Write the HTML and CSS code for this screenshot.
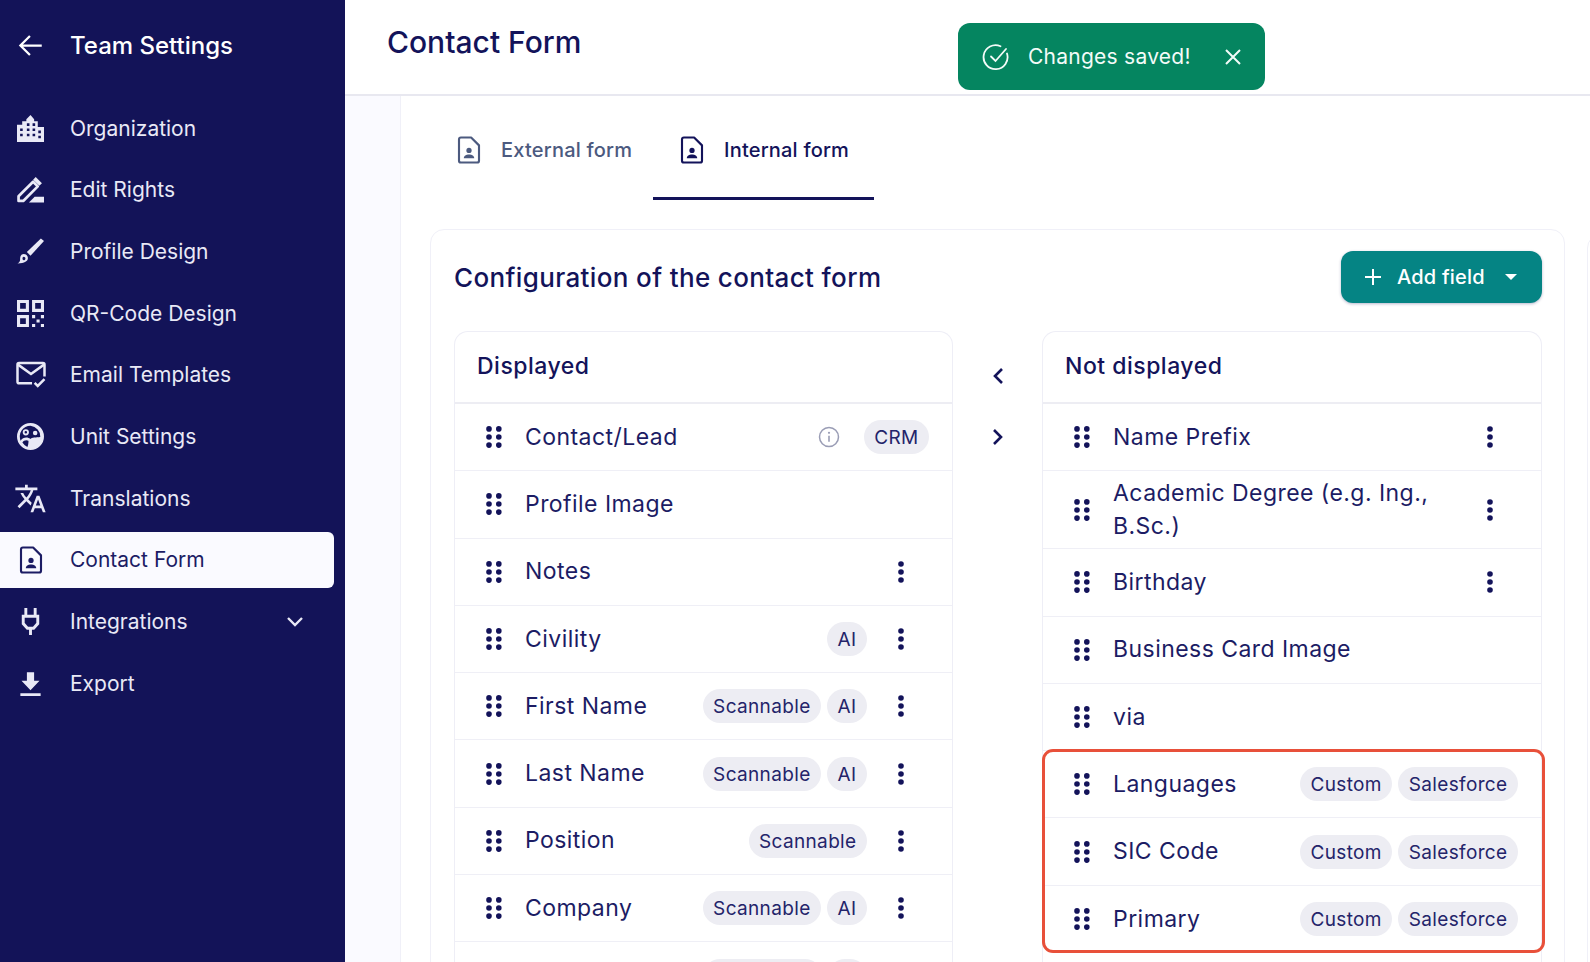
FILE: index.html
```html
<!DOCTYPE html>
<html lang="en">
<head>
    <meta charset="UTF-8">
    <title>Contact Form</title>
    <link rel="stylesheet" href="styles.css">
</head>
<body>
<svg class="sprite" width="0" height="0">
    <symbol id="i-form" viewBox="0 0 24 24">
        <path d="M5.500 2h8.200L20 8.300V20.500a1.500 1.500 0 0 1-1.500 1.500h-13A1.500 1.500 0 0 1 4 20.500v-17A1.500 1.500 0 0 1 5.500 2z" fill="none" stroke="currentColor" stroke-width="1.700" stroke-linejoin="round"/>
        <circle cx="12" cy="12.300" r="2.100" fill="currentColor"/>
        <path d="M7.800 18.600c0-2 1.900-3.100 4.200-3.100s4.200 1.100 4.200 3.100z" fill="currentColor"/>
    </symbol>
    <symbol id="i-drag" viewBox="0 0 16 22">
        <circle cx="3" cy="2.900" r="2.800"/><circle cx="12.800" cy="2.900" r="2.800"/>
        <circle cx="3" cy="11" r="2.800"/><circle cx="12.800" cy="11" r="2.800"/>
        <circle cx="3" cy="19.100" r="2.800"/><circle cx="12.800" cy="19.100" r="2.800"/>
    </symbol>
    <symbol id="i-more" viewBox="0 0 6 22">
        <circle cx="3" cy="3" r="2.800"/><circle cx="3" cy="11" r="2.800"/><circle cx="3" cy="19" r="2.800"/>
    </symbol>
</svg>

<div class="app">
    <aside class="sidebar">
        <header class="side-head">
            <svg class="side-icon" viewBox="0 0 24 24"><path d="M22 12H3.500M11.500 3.500 3 12l8.500 8.500" fill="none" stroke="currentColor" stroke-width="2"/></svg>
            <span>Team Settings</span>
        </header>
        <ul class="side-list">
            <li class="side-item">
                <svg class="side-icon" viewBox="0 0 26 26"><path fill-rule="evenodd" fill="currentColor" d="M0 26V9.500h5V6h4V4L13 0l3.500 4v2h3.500v5.500h6V26zM3 13v2.500h2.500V13zm0 5v2.500h2.500V18zm6.500-5v2.500H12V13zm0 5v2.500H12V18zm0-10v2.500H12V8zm5.500 5v2.500h2.500V13zm0 5v2.500h2.500V18zm0-10v2.500h2.500V8zm5.500 7v2.500H23V15zm0 5v2.500H23V20z"/></svg>
                <span>Organization</span>
            </li>
            <li class="side-item">
                <svg class="side-icon" viewBox="0 0 26 26"><path d="M1.500 24v-4.500L15.500 5.500l4.500 4.500L6 24z" fill="none" stroke="currentColor" stroke-width="2.600" stroke-linejoin="round"/><path d="m18 1 6 6-2.500 2.500-6-6z" fill="currentColor"/><path d="m11.500 25.500 5.500-5.500h9v5.500z" fill="currentColor"/></svg>
                <span>Edit Rights</span>
            </li>
            <li class="side-item">
                <svg class="side-icon" viewBox="0 0 26 26"><path d="M26 3 13 17l-3.500-3.500L23 .5z" fill="currentColor"/><path d="M6.500 15.500c2.500 0 4 1.700 4 3.800 0 3-3 5.200-10 5.200 1.800-1 2.500-2.200 2.500-3.900 0-2.800 1-5.100 3.500-5.100zm0 2.600c-.9 0-1.200.9-1.200 2 0 .8.500 1.300 1.200 1.300.9 0 1.600-.7 1.600-1.700 0-.9-.7-1.600-1.600-1.600z" fill="currentColor" fill-rule="evenodd"/></svg>
                <span>Profile Design</span>
            </li>
            <li class="side-item">
                <svg class="side-icon" viewBox="0 0 26 26"><path fill-rule="evenodd" fill="currentColor" d="M0 0h11.500v11.500H0zm3 3v5.500h5.500V3zM14.500 0H26v11.500H14.500zM17.500 3v5.500H23V3zM0 14.500h11.500V26H0zM3 17.500V23h5.500v-5.500z"/><path fill="currentColor" d="M14.500 14.500h3v3h-3zm8.500 0h3v3h-3zm-4.200 4.200h3v3h-3zm-4.300 4.300h3v3h-3zm8.500 0h3v3h-3z"/></svg>
                <span>QR-Code Design</span>
            </li>
            <li class="side-item">
                <svg class="side-icon side-icon-mail" viewBox="0 0 28 26"><path d="M15 21.500H2.500A1.500 1.500 0 0 1 1 20V3.500A1.500 1.500 0 0 1 2.500 2h23A1.500 1.500 0 0 1 27 3.500V15" fill="none" stroke="currentColor" stroke-width="2.400"/><path d="m1.500 3.500 12.500 9 12.500-9" fill="none" stroke="currentColor" stroke-width="2.400"/><path d="m17.500 21 3 3 6.500-6.500" fill="none" stroke="currentColor" stroke-width="2.400"/></svg>
                <span>Email Templates</span>
            </li>
            <li class="side-item">
                <svg class="side-icon" viewBox="0 0 26 26"><path fill-rule="evenodd" fill="currentColor" d="M13 0a13 13 0 1 1 0 26 13 13 0 0 1 0-26zm0 2.600A10.400 10.400 0 0 0 3.500 17c1.200-2 3.300-3 5.500-3 1.500 0 2.800.500 3.800 1.400 1.500-1.800 5.500-1.200 9.600-1.900A10.400 10.400 0 0 0 13 2.600zM8.500 6a3 3 0 1 1 0 6 3 3 0 0 1 0-6zm0 1.800a1.200 1.200 0 1 0 0 2.400 1.200 1.200 0 0 0 0-2.400zM17.500 7.500a2.200 2.200 0 1 1 0 4.400 2.200 2.200 0 0 1 0-4.400zM9 16.500c-1.500 0-3 .8-3.800 2.300A10.400 10.400 0 0 0 10 23c.8-1.700 1.200-3.700 1-5.800-.5-.4-1.200-.7-2-.7z"/></svg>
                <span>Unit Settings</span>
            </li>
            <li class="side-item">
                <svg class="side-icon side-icon-xl" viewBox="0 0 24 24"><path fill="currentColor" d="M12.870 15.070l-2.540-2.510.03-.03c1.740-1.940 2.980-4.170 3.710-6.530H17V4h-7V2H8v2H1v1.990h11.170C11.500 7.920 10.440 9.750 9 11.350 8.070 10.320 7.300 9.190 6.690 8h-2c.73 1.630 1.730 3.170 2.980 4.560l-5.090 5.020L4 19l5-5 3.110 3.110.76-2.040zM18.500 10h-2L12 22h2l1.120-3h4.750L21 22h2l-4.500-12zm-2.620 7l1.620-4.330L19.120 17h-3.240z"/></svg>
                <span>Translations</span>
            </li>
            <li class="side-item active">
                <svg class="side-icon side-icon-lg"><use href="#i-form"/></svg>
                <span>Contact Form</span>
            </li>
            <li class="side-item">
                <svg class="side-icon" viewBox="0 0 26 26"><path d="M8.500 0v7M17.500 0v7M6 8h14v7l-4 4.500h-6L6 15zM13 19.500V26" fill="none" stroke="currentColor" stroke-width="2.800"/></svg>
                <span>Integrations</span>
                <svg class="side-caret" viewBox="0 0 18 12"><path d="m2 2 7 7 7-7" fill="none" stroke="currentColor" stroke-width="2.400"/></svg>
            </li>
            <li class="side-item">
                <svg class="side-icon" viewBox="0 0 24 24"><path fill="currentColor" d="M3 23h18v-2.400H3zM20 9.500h-4.800V2H8.800v7.500H4l8 8.500z"/></svg>
                <span>Export</span>
            </li>
        </ul>
    </aside>

    <main class="main">
        <header class="top-bar">
            <h1>Contact Form</h1>
            <div class="toast">
                <svg class="toast-check" viewBox="0 0 28 28"><path d="M25 10.500A12 12 0 1 1 18.500 3.200" fill="none" stroke="currentColor" stroke-width="1.800" stroke-linecap="round"/><path d="m9 13.500 4.500 4.500L24 6" fill="none" stroke="currentColor" stroke-width="1.800" stroke-linecap="round"/></svg>
                <span>Changes saved!</span>
                <svg class="toast-close" viewBox="0 0 18 18"><path d="m2 2 14 14M16 2 2 16" fill="none" stroke="currentColor" stroke-width="2"/></svg>
            </div>
        </header>

        <div class="content">
            <div class="strip"></div>
            <section class="page">
                <ul class="tabs">
                    <li class="tab">
                        <svg class="tab-icon"><use href="#i-form"/></svg>
                        <span>External form</span>
                    </li>
                    <li class="tab selected">
                        <svg class="tab-icon"><use href="#i-form"/></svg>
                        <span>Internal form</span>
                    </li>
                </ul>

                <div class="cards">
                    <div class="card">
                        <div class="card-head">
                            <h2>Configuration of the contact form</h2>
                            <button class="add-btn">
                                <svg class="add-plus" viewBox="0 0 18 18"><path d="M9 1v16M1 9h16" fill="none" stroke="currentColor" stroke-width="2"/></svg>
                                <span>Add field</span>
                                <i class="add-caret"></i>
                            </button>
                        </div>

                        <div class="columns">
                            <div class="panel panel-left">
                                <h3 class="panel-title">Displayed</h3>
                                <div class="row">
                                    <svg class="drag"><use href="#i-drag"/></svg>
                                    <span class="name">Contact/Lead</span>
                                    <svg class="info" viewBox="0 0 22 22"><circle cx="11" cy="11" r="9.500" fill="none" stroke="currentColor" stroke-width="1.500"/><path d="M11 9.800v6" stroke="currentColor" stroke-width="1.600"/><circle cx="11" cy="6.800" r="1.100" fill="currentColor"/></svg>
                                    <span class="tag">CRM</span>
                                </div>
                                <div class="row">
                                    <svg class="drag"><use href="#i-drag"/></svg>
                                    <span class="name">Profile Image</span>
                                </div>
                                <div class="row">
                                    <svg class="drag"><use href="#i-drag"/></svg>
                                    <span class="name">Notes</span>
                                    <svg class="more"><use href="#i-more"/></svg>
                                </div>
                                <div class="row">
                                    <svg class="drag"><use href="#i-drag"/></svg>
                                    <span class="name">Civility</span>
                                    <span class="tag">AI</span>
                                    <svg class="more"><use href="#i-more"/></svg>
                                </div>
                                <div class="row">
                                    <svg class="drag"><use href="#i-drag"/></svg>
                                    <span class="name">First Name</span>
                                    <span class="tag">Scannable</span>
                                    <span class="tag">AI</span>
                                    <svg class="more"><use href="#i-more"/></svg>
                                </div>
                                <div class="row">
                                    <svg class="drag"><use href="#i-drag"/></svg>
                                    <span class="name">Last Name</span>
                                    <span class="tag">Scannable</span>
                                    <span class="tag">AI</span>
                                    <svg class="more"><use href="#i-more"/></svg>
                                </div>
                                <div class="row">
                                    <svg class="drag"><use href="#i-drag"/></svg>
                                    <span class="name">Position</span>
                                    <span class="tag">Scannable</span>
                                    <svg class="more"><use href="#i-more"/></svg>
                                </div>
                                <div class="row">
                                    <svg class="drag"><use href="#i-drag"/></svg>
                                    <span class="name">Company</span>
                                    <span class="tag">Scannable</span>
                                    <span class="tag">AI</span>
                                    <svg class="more"><use href="#i-more"/></svg>
                                </div>
                                <!-- only the top of the next row's pills is inside the window -->
                                <div class="row">
                                    <svg class="drag"><use href="#i-drag"/></svg>
                                    <span class="name"></span>
                                    <span class="tag tag-wide"></span>
                                    <span class="tag tag-small"></span>
                                    <svg class="more"><use href="#i-more"/></svg>
                                </div>
                            </div>

                            <div class="arrows">
                                <svg class="arrow" viewBox="0 0 12 18"><path d="M10 2 3 9l7 7" fill="none" stroke="currentColor" stroke-width="2.600"/></svg>
                                <svg class="arrow" viewBox="0 0 12 18"><path d="m2 2 7 7-7 7" fill="none" stroke="currentColor" stroke-width="2.600"/></svg>
                            </div>

                            <div class="panel panel-right">
                                <h3 class="panel-title">Not displayed</h3>
                                <div class="row">
                                    <svg class="drag"><use href="#i-drag"/></svg>
                                    <span class="name">Name Prefix</span>
                                    <svg class="more"><use href="#i-more"/></svg>
                                </div>
                                <div class="row">
                                    <svg class="drag"><use href="#i-drag"/></svg>
                                    <span class="name">Academic Degree (e.g. Ing.,<br>B.Sc.)</span>
                                    <svg class="more"><use href="#i-more"/></svg>
                                </div>
                                <div class="row">
                                    <svg class="drag"><use href="#i-drag"/></svg>
                                    <span class="name">Birthday</span>
                                    <svg class="more"><use href="#i-more"/></svg>
                                </div>
                                <div class="row">
                                    <svg class="drag"><use href="#i-drag"/></svg>
                                    <span class="name">Business Card Image</span>
                                </div>
                                <div class="row">
                                    <svg class="drag"><use href="#i-drag"/></svg>
                                    <span class="name">via</span>
                                </div>
                                <div class="highlight">
                                    <div class="row">
                                        <svg class="drag"><use href="#i-drag"/></svg>
                                        <span class="name">Languages</span>
                                        <span class="tag">Custom</span>
                                        <span class="tag">Salesforce</span>
                                    </div>
                                    <div class="row">
                                        <svg class="drag"><use href="#i-drag"/></svg>
                                        <span class="name">SIC Code</span>
                                        <span class="tag">Custom</span>
                                        <span class="tag">Salesforce</span>
                                    </div>
                                    <div class="row">
                                        <svg class="drag"><use href="#i-drag"/></svg>
                                        <span class="name">Primary</span>
                                        <span class="tag">Custom</span>
                                        <span class="tag">Salesforce</span>
                                    </div>
                                </div>
                            </div>
                        </div>
                    </div>
                    <div class="card card-next"></div>
                </div>
            </section>
        </div>
    </main>
</div>
</body>
</html>
```

FILE: styles.css
```css
*{
    padding: 0;
    margin: 0;
    box-sizing: border-box;
}
html,body{
    height: 100%;
    overflow: hidden;
}
body{
    font-family: "Inter", "Open Sans", sans-serif;
    color: #13135a;
    background: #fff;
}
ul{
    list-style: none;
}
.sprite{
    position: absolute;
}
.app{
    display: flex;
    height: 962px;
}

/* sidebar */
.sidebar{
    width: 345px;
    flex: none;
    background: #131358;
    color: #e9e9f6;
}
.side-head{
    display: flex;
    align-items: center;
    height: 90px;
    padding-left: 17px;
    gap: 26px;
    color: #fff;
    font-size: 24px;
    font-weight: 500;
}
.side-icon{
    width: 27px;
    height: 27px;
    flex: none;
}
.side-icon-lg{
    width: 30px;
    height: 30px;
    margin: 0 -1.5px;
}
.side-icon-xl{
    width: 33px;
    height: 33px;
    margin: 0 -3px;
}
.side-icon-mail{
    width: 30px;
    margin: 0 -1.5px;
}
.side-list{
    display: flex;
    flex-direction: column;
    gap: 5.7px;
    padding-top: 10px;
}
.side-item{
    display: flex;
    align-items: center;
    gap: 26px;
    height: 56px;
    width: 334px;
    padding-left: 17px;
    font-size: 21px;
}
.side-item.active{
    background: #fafaff;
    color: #1c1c64;
    border-radius: 0 6px 6px 0;
}
.side-caret{
    width: 18px;
    height: 12px;
    margin-left: auto;
    margin-right: 30px;
}

/* top bar */
.main{
    flex: 1;
    min-width: 0;
    display: flex;
    flex-direction: column;
}
.top-bar{
    position: relative;
    height: 96px;
    flex: none;
    padding: 22px 0 0 42px;
    border-bottom: 2px solid #e8e8f0;
}
.top-bar h1{
    font-size: 30px;
    font-weight: 500;
    line-height: 40px;
}
.toast{
    position: absolute;
    left: 613px;
    top: 23px;
    width: 307px;
    height: 67px;
    display: flex;
    align-items: center;
    padding-left: 24px;
    background: #058560;
    color: #f3fbf8;
    border-radius: 12px;
    font-size: 21px;
    letter-spacing: .25px;
}
.toast-check{
    width: 28px;
    height: 28px;
    margin-right: 18px;
}
.toast-close{
    width: 18px;
    height: 18px;
    margin-left: auto;
    margin-right: 23px;
}

/* content */
.content{
    flex: 1;
    min-height: 0;
    display: flex;
}
.strip{
    width: 56px;
    flex: none;
    background: #fafaff;
    border-right: 1px solid #f0f0f8;
}
.page{
    flex: 1;
    min-width: 0;
    overflow: hidden;
}
.tabs{
    display: flex;
    height: 104px;
    padding-left: 29px;
}
.tab{
    display: flex;
    align-items: center;
    gap: 21px;
    width: 223px;
    height: 104px;
    padding: 7px 0 3px 28px;
    font-size: 20px;
    font-weight: 500;
    letter-spacing: .2px;
    color: #4c5a7f;
}
.tab.selected{
    width: 221px;
    color: #13135a;
    border-bottom: 3px solid #13135a;
    padding-bottom: 0;
}
.tab-icon{
    width: 30px;
    height: 30px;
    margin: 0 -4px;
    flex: none;
}
.cards{
    display: flex;
    gap: 22px;
    padding: 29px 0 0 29px;
}
.card{
    flex: none;
    width: 1135px;
    border: 1px solid #f0f0f8;
    border-radius: 14px;
    padding: 21px 22px 0 23px;
}
.card-next{
    margin-top: 5px;
    width: 100px;
}
.card-head{
    display: flex;
    align-items: center;
    justify-content: space-between;
    height: 52px;
    margin-bottom: 28px;
}
.card-head h2{
    font-size: 26px;
    font-weight: 500;
    letter-spacing: .36px;
}
.add-btn{
    display: flex;
    align-items: center;
    width: 201px;
    height: 52px;
    padding-left: 23px;
    border: none;
    border-radius: 12px;
    background: #058484;
    color: #fff;
    font: 500 20px "Inter", sans-serif;
    letter-spacing: .2px;
    box-shadow: 0 1px 3px rgba(19,19,90,.3);
}
.add-plus{
    width: 18px;
    height: 18px;
    margin-right: 15px;
}
.add-caret{
    border: 6px solid transparent;
    border-top-color: #fff;
    border-bottom: none;
    margin-left: auto;
    margin-right: 25px;
}

/* lists */
.columns{
    display: grid;
    grid-template-columns: 499px 89px 500px;
}
.panel{
    border: 1px solid #eeeef6;
    border-bottom: none;
    border-radius: 14px 14px 0 0;
}
.panel-title{
    height: 72px;
    padding: 0 0 2px 22px;
    display: flex;
    align-items: center;
    font-size: 23px;
    font-weight: 500;
    letter-spacing: .5px;
    border-bottom: 2px solid #ededf3;
}
.row{
    display: flex;
    align-items: center;
    min-height: 67.3px;
    padding: 5.5px 23px 5.5px 31px;
    border-bottom: 1px solid #efeff6;
    font-size: 23px;
    letter-spacing: .45px;
    line-height: 33px;
}
.highlight .row:last-child{
    border-bottom: none;
}
.drag{
    width: 16px;
    height: 22px;
    flex: none;
    margin-right: 23px;
    fill: #13135a;
}
.more{
    width: 6px;
    height: 22px;
    flex: none;
    margin: 0 25px 0 31px;
    fill: #13135a;
}
.name{
    flex: 1;
    min-width: 0;
    color: #1c1c64;
}
.info{
    width: 22px;
    height: 22px;
    margin-right: 18px;
    color: #9a9db5;
}
.tag{
    display: block;
    height: 34px;
    line-height: 35px;
    padding: 0 10.5px;
    margin-left: 6px;
    background: #ededf3;
    border-radius: 17px;
    font-size: 19px;
    letter-spacing: .35px;
    color: #24246a;
}
.tag-wide{
    width: 119px;
}
.tag-small{
    width: 39px;
}
.arrows{
    display: flex;
    flex-direction: column;
    align-items: center;
    gap: 43px;
    padding-top: 36px;
}
.arrow{
    width: 12px;
    height: 18px;
}
.highlight{
    position: relative;
}
.highlight::after{
    content: "";
    position: absolute;
    inset: -2px -4px 0 -1px;
    border: 3px solid #e8503a;
    border-radius: 11px;
}
```
